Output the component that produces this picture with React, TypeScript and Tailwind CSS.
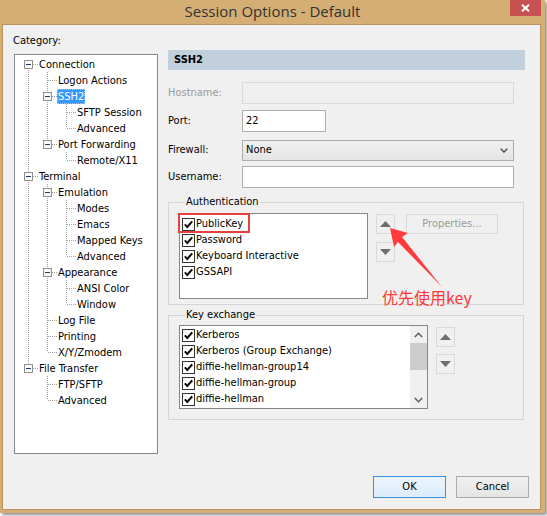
type TreeItem = { label: string; level: number; exp?: boolean; sel?: boolean };

const tree: TreeItem[] = [
  { label: "Connection", level: 0, exp: true },
  { label: "Logon Actions", level: 1 },
  { label: "SSH2", level: 1, exp: true, sel: true },
  { label: "SFTP Session", level: 2 },
  { label: "Advanced", level: 2 },
  { label: "Port Forwarding", level: 1, exp: true },
  { label: "Remote/X11", level: 2 },
  { label: "Terminal", level: 0, exp: true },
  { label: "Emulation", level: 1, exp: true },
  { label: "Modes", level: 2 },
  { label: "Emacs", level: 2 },
  { label: "Mapped Keys", level: 2 },
  { label: "Advanced", level: 2 },
  { label: "Appearance", level: 1, exp: true },
  { label: "ANSI Color", level: 2 },
  { label: "Window", level: 2 },
  { label: "Log File", level: 1 },
  { label: "Printing", level: 1 },
  { label: "X/Y/Zmodem", level: 1 },
  { label: "File Transfer", level: 0, exp: true },
  { label: "FTP/SFTP", level: 1 },
  { label: "Advanced", level: 1 },
];

const hasNext = (i: number) => {
  for (let j = i + 1; j < tree.length; j++) {
    if (tree[j].level < tree[i].level) return false;
    if (tree[j].level === tree[i].level) return true;
  }
  return false;
};

const ancestorAt = (i: number, level: number) => {
  for (let k = i - 1; k >= 0; k--) if (tree[k].level === level) return k;
  return -1;
};

const DOT = "#a0a0a0";

const TreeCell = ({ top, bottom, branch, exp }: { top: boolean; bottom: boolean; branch: boolean; exp?: boolean }) => (
  <svg width="19" height="16" className="shrink-0">
    {top && <line x1="9.5" y1="0" x2="9.5" y2="8" stroke={DOT} strokeDasharray="1 1" />}
    {bottom && <line x1="9.5" y1="8" x2="9.5" y2="16" stroke={DOT} strokeDasharray="1 1" />}
    {branch && <line x1={exp ? 14 : 10} y1="8.5" x2="19" y2="8.5" stroke={DOT} strokeDasharray="1 1" />}
    {exp && (
      <>
        <rect x="5.5" y="4.5" width="8" height="8" fill="#fafafa" stroke="#919191" />
        <line x1="7" y1="8.5" x2="12" y2="8.5" stroke="#1f3b66" />
      </>
    )}
  </svg>
);

const TreeRow = ({ i }: { i: number }) => {
  const item = tree[i];
  const cols = [];
  for (let c = 0; c < item.level; c++) {
    const a = ancestorAt(i, c);
    const cont = a >= 0 && hasNext(a);
    cols.push(<TreeCell key={c} top={cont} bottom={cont} branch={false} />);
  }
  return (
    <div className="flex h-4 items-center">
      {cols}
      <TreeCell top={i !== 0} bottom={hasNext(i)} branch exp={item.exp} />
      <span
        className={
          item.sel
            ? "h-[15px] whitespace-nowrap bg-[#3399ff] px-px leading-[15px] text-white outline-1 outline-dotted outline-[#9cc9f5] -outline-offset-1"
            : "h-[15px] whitespace-nowrap px-px leading-[15px] text-black"
        }
      >
        {item.label}
      </span>
    </div>
  );
};

const CheckBox = () => (
  <span className="flex h-[13px] w-[13px] shrink-0 items-center justify-center border border-[#333] bg-white">
    <svg width="11" height="11" viewBox="0 0 11 11">
      <path d="M1.8 5.4 L4.3 8 L9.2 2.4" fill="none" stroke="#000" strokeWidth="2" />
    </svg>
  </span>
);

const CheckRow = ({ label }: { label: string }) => (
  <div className="flex h-4 items-center pl-[2px]">
    <CheckBox />
    <span className="ml-[1px] whitespace-nowrap leading-[14px]">{label}</span>
  </div>
);

const ArrowButton = ({ up, className = "" }: { up?: boolean; className?: string }) => (
  <div className={`flex h-[20px] w-[19px] items-center justify-center border border-[#d9d9d9] bg-[#f0f0f0] ${className}`}>
    <svg width="11" height="6">
      <polygon points={up ? "0,6 5.5,0 11,6" : "0,0 5.5,6 11,0"} fill="#6e6e6e" />
    </svg>
  </div>
);

const Chevron = ({ up }: { up?: boolean }) => (
  <svg width="9" height="6">
    <path d={up ? "M0.8 5 L4.5 1.3 L8.2 5" : "M0.8 1 L4.5 4.7 L8.2 1"} fill="none" stroke="#606060" strokeWidth="1.6" />
  </svg>
);

const FormRow = ({ label, disabled, children, className = "" }: { label: string; disabled?: boolean; children: React.ReactNode; className?: string }) => (
  <div className={`flex items-center pr-[11px] ${className}`}>
    <span className={`w-[74px] shrink-0 ${disabled ? "text-[#9a9a9a]" : "text-black"}`}>{label}</span>
    {children}
  </div>
);

const authItems = ["PublicKey", "Password", "Keyboard Interactive", "GSSAPI"];
const kexItems = ["Kerberos", "Kerberos (Group Exchange)", "diffie-hellman-group14", "diffie-hellman-group", "diffie-hellman"];

export default function App() {
  return (
    <div className="relative h-[516px] w-[547px] overflow-hidden bg-white text-[11px] text-black [font-family:'DejaVu_Sans_Condensed','Liberation_Sans',sans-serif]">
      <div className="flex h-[513px] w-[545px] flex-col bg-[#d4ae74] pb-[3px] pl-[2px] pr-[4px] shadow-[2px_2px_3px_rgba(0,0,0,0.45)]">
        {/* title bar */}
        <div className="-ml-[2px] -mr-[4px] grid h-[24px] shrink-0 grid-cols-[1fr_auto_1fr]">
          <div />
          <div className="pb-[2px] text-[15px] leading-[22px] text-[#333] [font-family:'Open_Sans',sans-serif]">
            Session Options - Default
          </div>
          <div className="flex justify-end pr-[4px]">
            <div className="flex h-[16px] w-[31px] items-center justify-center bg-[#c75050]">
              <svg width="9" height="8">
                <path d="M1 0.8 L8 7.2 M8 0.8 L1 7.2" stroke="#fff" strokeWidth="2" />
              </svg>
            </div>
          </div>
        </div>

        {/* client */}
        <div className="flex flex-1 flex-col border border-[#b9935b] bg-[#f0f0f0]">
          <div className="flex">
            {/* category */}
            <div className="ml-[11px] flex w-[144px] flex-col pt-[9px]">
              <div className="-ml-px leading-[13px]">Category:</div>
              <div className="mt-[7px] h-[400px] border border-[#828790] bg-white pl-[4px] pt-px">
                {tree.map((_, i) => (
                  <TreeRow key={i} i={i} />
                ))}
              </div>
            </div>

            {/* panel */}
            <div className="ml-[10px] flex w-[357px] flex-col pt-[25px]">
              <div className="flex h-[20px] items-center bg-[#c2cfdc] pl-[6px] font-bold">SSH2</div>

              <FormRow label="Hostname:" disabled className="mt-[12px]">
                <div className="h-[22px] flex-1 border border-[#d9d9d9] bg-[#f0f0f0]" />
              </FormRow>
              <FormRow label="Port:" className="mt-[6px]">
                <div className="flex h-[22px] w-[84px] items-center border border-[#abadb3] bg-white pl-[3px]">22</div>
              </FormRow>
              <FormRow label="Firewall:" className="mt-[8px]">
                <div className="flex h-[21px] flex-1 items-center justify-between border border-[#acacac] bg-gradient-to-b from-[#f0f0f0] to-[#e5e5e5] pl-[3px] pr-[5px]">
                  <span>None</span>
                  <svg width="8" height="5">
                    <path d="M0.7 0.7 L4 4 L7.3 0.7" fill="none" stroke="#555" strokeWidth="1.5" />
                  </svg>
                </div>
              </FormRow>
              <FormRow label="Username:" className="mt-[5px]">
                <div className="h-[22px] flex-1 border border-[#abadb3] bg-white" />
              </FormRow>

              <fieldset className="mt-[7px] w-[356px] border border-[#d5d5d5] pb-[5px] pl-[10px] pt-[4px]">
                <legend className="ml-[6px] px-px leading-[14px]">Authentication</legend>
                <div className="flex items-start">
                  <div className="h-[86px] w-[189px] border border-[#828790] bg-white pt-[2px]">
                    {authItems.map((t) => (
                      <CheckRow key={t} label={t} />
                    ))}
                  </div>
                  <div className="ml-[8px] mt-px flex flex-col">
                    <ArrowButton up />
                    <ArrowButton className="mt-[8px]" />
                  </div>
                  <div className="ml-[11px] mt-px flex h-[20px] w-[92px] items-center justify-center border border-[#d9d9d9] bg-[#f0f0f0] text-[#9a9a9a]">
                    Properties...
                  </div>
                </div>
              </fieldset>

              <fieldset className="mt-[3px] w-[356px] border border-[#d5d5d5] pb-[10px] pl-[10px] pt-[3px]">
                <legend className="ml-[6px] px-px leading-[14px]">Key exchange</legend>
                <div className="flex items-start">
                  <div className="flex h-[84px] w-[249px] border border-[#828790] bg-white">
                    <div className="flex-1 pt-px">
                      {kexItems.map((t) => (
                        <CheckRow key={t} label={t} />
                      ))}
                    </div>
                    <div className="flex w-[17px] flex-col bg-[#f0f0f0]">
                      <div className="flex h-[17px] items-center justify-center">
                        <Chevron up />
                      </div>
                      <div className="h-[27px] bg-[#cdcdcd]" />
                      <div className="flex-1" />
                      <div className="flex h-[17px] items-center justify-center">
                        <Chevron />
                      </div>
                    </div>
                  </div>
                  <div className="ml-[8px] mt-[2px] flex flex-col">
                    <ArrowButton up />
                    <ArrowButton className="mt-[7px]" />
                  </div>
                </div>
              </fieldset>
            </div>
          </div>

          <div className="mt-[22px] flex justify-end gap-[10px] pr-[11px]">
            <div className="flex h-[22px] w-[73px] items-center justify-center border border-[#3c8fe0] bg-gradient-to-b from-[#ecf4fc] to-[#dcecfc]">
              OK
            </div>
            <div className="flex h-[22px] w-[73px] items-center justify-center border border-[#acacac] bg-gradient-to-b from-[#f0f0f0] to-[#e5e5e5]">
              Cancel
            </div>
          </div>
        </div>
      </div>

      {/* annotations drawn over the screenshot */}
      <div className="absolute left-[178px] top-[213px] h-[20px] w-[72px] border-2 border-[#e8403f]" />
      <svg className="absolute left-0 top-0" width="547" height="516">
        <polygon points="390,228 408,233 402,237 442,287 398,242 394,247" fill="#ff3b3b" />
      </svg>
      <div className="absolute left-[382px] top-[289px] text-[16px] leading-[17px] text-[#ff3838] [font-family:'Noto_Sans_CJK_SC',sans-serif]">
        优先使用key
      </div>
    </div>
  );
}
